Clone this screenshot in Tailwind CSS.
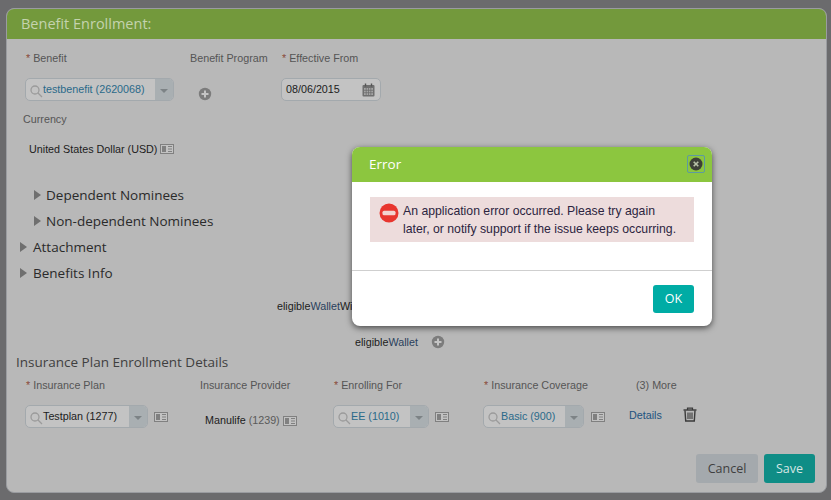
<!DOCTYPE html>
<html lang="en">
<head>
    <meta charset="UTF-8">
    <title>Benefit Enrollment</title>
    <script src="https://cdn.jsdelivr.net/npm/@tailwindcss/browser@4"></script>
</head>
<body class="w-[831px] h-[500px] overflow-hidden bg-[#6b6b6d] font-['Liberation_Sans',sans-serif] text-[10.75px] relative">
    <!-- enrollment form, dimmed behind the dialog -->
    <div class="absolute left-[6px] top-[8px] w-[821px] h-[485px] rounded-lg border border-[#9a9ca0] bg-[#b8b8b8] overflow-hidden flex flex-col">
        <div class="h-[30px] shrink-0 bg-[#73993c] pl-[14px] flex items-center font-['Open_Sans',sans-serif] text-[14.5px] text-[#c4d3ae]">Benefit Enrollment:</div>

        <div class="flex h-[14px] mt-[12px] items-center text-[#555]">
            <div class="ml-[19px] w-[164px]"><span class="text-[#8a4b3a]">*</span> Benefit</div>
            <div class="w-[92px]">Benefit Program</div>
            <div><span class="text-[#8a4b3a]">*</span> Effective From</div>
        </div>

        <div class="flex items-center mt-[13px] h-[23px]">
            <div class="ml-[18px] w-[149px] h-[23px] rounded-[5px] border border-[#a3a9ad] bg-[#c3c3c3] flex overflow-hidden">
                <div class="w-[17px] flex items-center justify-end pt-[2px]">
                    <svg width="14" height="14" viewBox="0 0 14 14" fill="none" stroke="#9b9b9b" stroke-width="1.3"><circle cx="6" cy="6" r="4"/><path d="M9 9l4 4"/></svg>
                </div>
                <div class="flex-1 leading-[21px] text-[#2a6a8a]">testbenefit (2620068)</div>
                <div class="w-[18px] bg-[#a9afb2] flex items-center justify-center pt-[2px]"><div class="border-x-[4px] border-x-transparent border-t-[4px] border-t-[#7d8386]"></div></div>
            </div>
            <svg class="ml-[24px] mt-[9px]" width="14" height="14" viewBox="0 0 14 14"><circle cx="7" cy="7" r="6.2" fill="#7c7c7c"/><path d="M3.5 7h7M7 3.5v7" stroke="#c4c4c4" stroke-width="2"/></svg>
            <div class="ml-[69px] w-[100px] h-[23px] rounded-[5px] border border-[#a3a9ad] bg-[#c3c3c3] flex items-center justify-between pl-[4px] pr-[5px] text-[#1c1c1c]">
                <span>08/06/2015</span>
                <svg width="13" height="14" viewBox="0 0 13 14"><rect x="0.5" y="2" width="12" height="11.5" rx="1" fill="#6f6f6f"/><rect x="2" y="5" width="9" height="7" fill="#a5a5a5"/><path d="M2 7.3h9M2 9.7h9M4.2 5v7M6.5 5v7M8.8 5v7" stroke="#6f6f6f" stroke-width=".8"/><path d="M3.5 .5v3M9.5 .5v3" stroke="#555" stroke-width="1.4"/></svg>
            </div>
        </div>

        <div class="ml-[16px] mt-[11px] h-[14px] leading-[14px] text-[#555]">Currency</div>

        <div class="ml-[22px] mt-[16px] h-[14px] flex items-center gap-[3px] text-[#1c1c1c]">
            <span>United States Dollar (USD)</span>
            <svg width="14" height="10" viewBox="0 0 14 10"><rect x=".5" y=".5" width="13" height="9" fill="#c2c2c2" stroke="#808080"/><rect x="2" y="2" width="4" height="6" fill="#808080"/><path d="M8 2.5h4M8 5h4M8 7.5h4" stroke="#808080"/></svg>
        </div>

        <div class="font-['Open_Sans',sans-serif] text-[13.5px] text-[#2a2a2a] mt-[26px] flex flex-col">
            <div class="h-[26px] flex items-center pl-[27px] gap-[5px]"><div class="border-y-[5px] border-y-transparent border-l-[7px] border-l-[#6f6f6f]"></div>Dependent Nominees</div>
            <div class="h-[26px] flex items-center pl-[27px] gap-[5px]"><div class="border-y-[5px] border-y-transparent border-l-[7px] border-l-[#6f6f6f]"></div>Non-dependent Nominees</div>
            <div class="h-[26px] flex items-center pl-[13px] gap-[6px]"><div class="border-y-[5px] border-y-transparent border-l-[7px] border-l-[#6f6f6f]"></div>Attachment</div>
            <div class="h-[26px] flex items-center pl-[13px] gap-[6px]"><div class="border-y-[5px] border-y-transparent border-l-[7px] border-l-[#6f6f6f]"></div>Benefits Info</div>
        </div>

        <div class="ml-[270px] mt-[13px] h-[14px] leading-[14px] text-[#1c1c1c]">eligible<span class="text-[#2a3f5c]">Wallet</span>With</div>
        <div class="ml-[348px] mt-[21px] h-[16px] flex items-center text-[#1c1c1c]">
            <span>eligible<span class="text-[#2a3f5c]">Wallet</span></span>
            <svg class="ml-[13px]" width="14" height="14" viewBox="0 0 14 14"><circle cx="7" cy="7" r="6.2" fill="#7c7c7c"/><path d="M3.5 7h7M7 3.5v7" stroke="#c4c4c4" stroke-width="2"/></svg>
        </div>

        <div class="ml-[9px] mt-[2px] h-[20px] leading-[20px] font-['Open_Sans',sans-serif] text-[13.5px] text-[#3f3f3f]">Insurance Plan Enrollment Details</div>

        <div class="flex h-[14px] mt-[6px] items-center text-[#555]">
            <div class="ml-[19px] w-[174px]"><span class="text-[#8a4b3a]">*</span> Insurance Plan</div>
            <div class="w-[134px]">Insurance Provider</div>
            <div class="w-[150px]"><span class="text-[#8a4b3a]">*</span> Enrolling For</div>
            <div class="w-[152px]"><span class="text-[#8a4b3a]">*</span> Insurance Coverage</div>
            <div>(3) More</div>
        </div>

        <div class="flex mt-[13px] h-[23px] items-center">
            <div class="ml-[18px] w-[123px] h-[23px] rounded-[5px] border border-[#a3a9ad] bg-[#c3c3c3] flex overflow-hidden">
                <div class="w-[17px] flex items-center justify-end pt-[2px]"><svg width="14" height="14" viewBox="0 0 14 14" fill="none" stroke="#9b9b9b" stroke-width="1.3"><circle cx="6" cy="6" r="4"/><path d="M9 9l4 4"/></svg></div>
                <div class="flex-1 leading-[21px] text-[#1c1c1c]">Testplan (1277)</div>
                <div class="w-[18px] bg-[#a9afb2] flex items-center justify-center pt-[2px]"><div class="border-x-[4px] border-x-transparent border-t-[4px] border-t-[#7d8386]"></div></div>
            </div>
            <svg class="ml-[6px]" width="14" height="10" viewBox="0 0 14 10"><rect x=".5" y=".5" width="13" height="9" fill="#c2c2c2" stroke="#808080"/><rect x="2" y="2" width="4" height="6" fill="#808080"/><path d="M8 2.5h4M8 5h4M8 7.5h4" stroke="#808080"/></svg>
            <div class="ml-[37px] w-[129px] flex items-center gap-[3px] pt-[8px] text-[#1c1c1c]">
                <span>Manulife <span class="text-[#5a5a5a]">(1239)</span></span>
                <svg width="14" height="10" viewBox="0 0 14 10"><rect x=".5" y=".5" width="13" height="9" fill="#c2c2c2" stroke="#808080"/><rect x="2" y="2" width="4" height="6" fill="#808080"/><path d="M8 2.5h4M8 5h4M8 7.5h4" stroke="#808080"/></svg>
            </div>
            <div class="ml-[-1px] w-[96px] h-[23px] rounded-[5px] border border-[#a3a9ad] bg-[#c3c3c3] flex overflow-hidden">
                <div class="w-[17px] flex items-center justify-end pt-[2px]"><svg width="14" height="14" viewBox="0 0 14 14" fill="none" stroke="#9b9b9b" stroke-width="1.3"><circle cx="6" cy="6" r="4"/><path d="M9 9l4 4"/></svg></div>
                <div class="flex-1 leading-[21px] text-[#2a6a8a]">EE (1010)</div>
                <div class="w-[18px] bg-[#a9afb2] flex items-center justify-center pt-[2px]"><div class="border-x-[4px] border-x-transparent border-t-[4px] border-t-[#7d8386]"></div></div>
            </div>
            <svg class="ml-[6px]" width="14" height="10" viewBox="0 0 14 10"><rect x=".5" y=".5" width="13" height="9" fill="#c2c2c2" stroke="#808080"/><rect x="2" y="2" width="4" height="6" fill="#808080"/><path d="M8 2.5h4M8 5h4M8 7.5h4" stroke="#808080"/></svg>
            <div class="ml-[34px] w-[101px] h-[23px] rounded-[5px] border border-[#a3a9ad] bg-[#c3c3c3] flex overflow-hidden">
                <div class="w-[17px] flex items-center justify-end pt-[2px]"><svg width="14" height="14" viewBox="0 0 14 14" fill="none" stroke="#9b9b9b" stroke-width="1.3"><circle cx="6" cy="6" r="4"/><path d="M9 9l4 4"/></svg></div>
                <div class="flex-1 leading-[21px] text-[#2a6a8a]">Basic (900)</div>
                <div class="w-[18px] bg-[#a9afb2] flex items-center justify-center pt-[2px]"><div class="border-x-[4px] border-x-transparent border-t-[4px] border-t-[#7d8386]"></div></div>
            </div>
            <svg class="ml-[7px]" width="14" height="10" viewBox="0 0 14 10"><rect x=".5" y=".5" width="13" height="9" fill="#c2c2c2" stroke="#808080"/><rect x="2" y="2" width="4" height="6" fill="#808080"/><path d="M8 2.5h4M8 5h4M8 7.5h4" stroke="#808080"/></svg>
            <a class="ml-[24px] mb-[2px] text-[#22527f]">Details</a>
            <svg class="ml-[21px] mb-[5px]" width="14" height="15" viewBox="0 0 14 15" fill="none" stroke="#3a3a3a"><path d="M.5 3h13" stroke-width="1.4"/><path d="M4.5 3V1.2h5V3" stroke-width="1.2"/><path d="M2 3.5l.7 10.5h8.6L12 3.5" stroke-width="1.4"/><path d="M5 5.5v6.5M7 5.5v6.5M9 5.5v6.5" stroke-width="1.1"/></svg>
        </div>

        <div class="mt-auto mb-[9px] mr-[11px] flex justify-end gap-[6px]">
            <button class="w-[62px] h-[29px] pt-[1px] rounded-[3px] bg-[#a4a9ad] font-['Open_Sans',sans-serif] text-[12.5px] text-[#3f3f3f]">Cancel</button>
            <button class="w-[51px] h-[29px] pt-[1px] rounded-[3px] bg-[#0f8d86] font-['Open_Sans',sans-serif] text-[12.5px] text-[#d6e6e4]">Save</button>
        </div>
    </div>

    <!-- error dialog -->
    <div class="absolute left-[352px] top-[147px] w-[360px] h-[179px] rounded-[8px] bg-white shadow-[0_2px_6px_rgba(0,0,0,0.6)] overflow-hidden flex flex-col">
        <div class="h-[35px] shrink-0 bg-[#8cc63f] pl-[17px] pr-[7px] pb-[1px] flex items-center justify-between font-['Open_Sans',sans-serif] text-[13.5px] text-white">
            <span>Error</span>
            <div class="w-[18px] h-[18px] border border-[#5d9aa0] rounded-[2px] flex items-center justify-center">
                <svg width="14" height="14" viewBox="0 0 14 14"><circle cx="7" cy="7" r="6.5" fill="#3d4037"/><path d="M4.7 4.7l4.6 4.6M9.3 4.7l-4.6 4.6" stroke="#b9c2a8" stroke-width="1.6"/></svg>
            </div>
        </div>
        <div class="h-[89px] shrink-0 px-[18px] pt-[15px] border-b border-[#cfcfcf]">
            <div class="h-[45px] bg-[#eddcdc] flex text-[12.25px] leading-[18px] text-[#2c2440]">
                <svg class="ml-[9px] mt-[6px] shrink-0" width="20" height="20" viewBox="0 0 20 20"><circle cx="10" cy="10" r="9.5" fill="#e8362f"/><rect x="3.5" y="7.7" width="13" height="4.6" rx="1.6" fill="#f3d3d0"/></svg>
                <p class="ml-[4px] pt-[5px] pr-[15px]">An application error occurred. Please try again later, or notify support if the issue keeps occurring.</p>
            </div>
        </div>
        <div class="flex-1 flex justify-end items-start pt-[14px] pr-[18px]">
            <button class="w-[41px] h-[28px] pt-[1px] rounded-[3px] bg-[#00aca5] font-['Open_Sans',sans-serif] text-[12.5px] text-white">OK</button>
        </div>
    </div>
</body>
</html>
